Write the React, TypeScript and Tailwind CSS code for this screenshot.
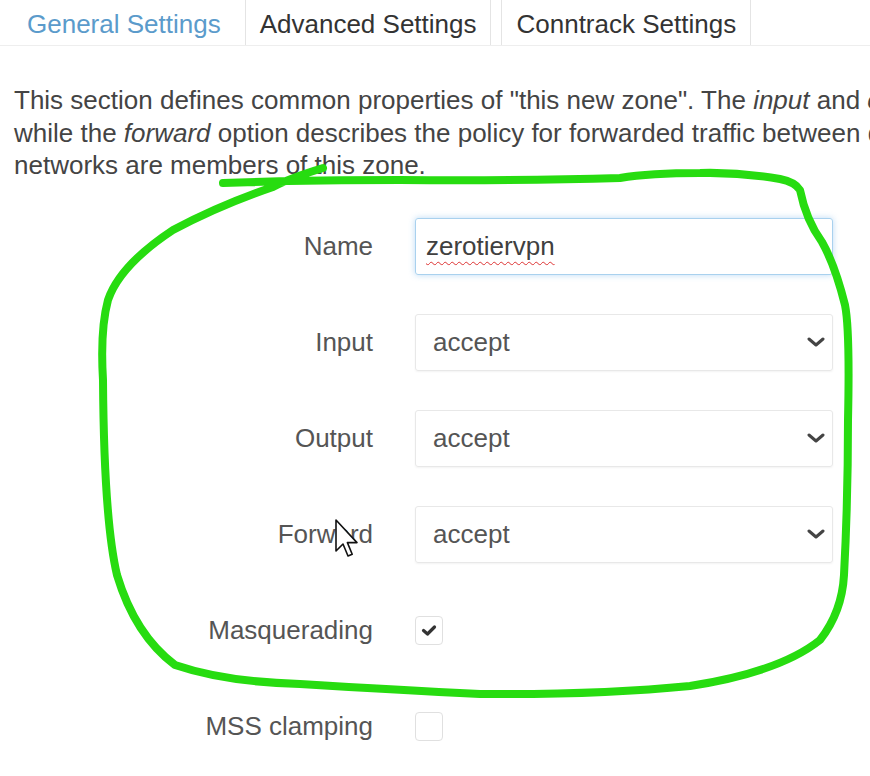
import React from "react";

const rows = [
  { label: "Input", value: "accept" },
  { label: "Output", value: "accept" },
  { label: "Forward", value: "accept" },
];

function Chevron() {
  return (
    <svg width="18" height="12" viewBox="0 0 18 12" className="text-[#444]">
      <path d="M2 3 L9 9 L16 3" fill="none" stroke="currentColor" strokeWidth="3" strokeLinecap="round" strokeLinejoin="round" />
    </svg>
  );
}

function Row({ label, children }: { label: string; children: React.ReactNode }) {
  return (
    <div className="flex items-center h-[57px] gap-[42px]">
      <div className="w-[373px] text-right text-[#555]">{label}</div>
      <div className="w-[418px]">{children}</div>
    </div>
  );
}

function Checkbox({ checked }: { checked?: boolean }) {
  return (
    <div className="w-[28px] h-[29px] border border-[#e0e0e0] rounded-[4px] bg-white flex items-center justify-center">
      {checked && (
        <svg width="16" height="13" viewBox="0 0 16 13">
          <path d="M2.5 6.5 L6.5 10 L13.5 3" fill="none" stroke="#333" strokeWidth="3.2" strokeLinecap="round" strokeLinejoin="round" />
        </svg>
      )}
    </div>
  );
}

export default function App() {
  return (
    <div className="relative w-[870px] h-[776px] overflow-hidden bg-white font-['Liberation_Sans',Arial,sans-serif] text-[26px]">
      <div className="flex items-stretch h-[46px] border-b border-[#eeeeee]">
        <div className="ml-[13px] px-[14px] pt-[3px] flex items-center text-[#5b9bcb]">General Settings</div>
        <div className="ml-[10px] px-[14px] pt-[3px] flex items-center text-[#333] border-x border-[#e4e4e4]">Advanced Settings</div>
        <div className="ml-[10px] px-[14px] pt-[3px] flex items-center text-[#333] border-x border-[#e4e4e4]">Conntrack Settings</div>
      </div>

      <div className="mt-[38px] pl-[14px] w-[870px] overflow-hidden leading-[32.5px] text-[#444] whitespace-nowrap">
        <p>
          This section defines common properties of "this new zone". The <i>input</i> and <i>output</i> options set the default policies for traffic entering and leaving this zone
        </p>
        <p>
          while the <i>forward</i> option describes the policy for forwarded traffic between different networks within the zone. <i>Covered networks</i> specifies which available
        </p>
        <p>networks are members of this zone.</p>
      </div>

      <div className="mt-[36px] flex flex-col gap-[39px]">
        <Row label="Name">
          <div className="h-[57px] border border-[#a9d1ee] rounded-[3px] shadow-[0_0_6px_rgba(102,175,233,0.45)] flex items-center px-[10px] text-[#404040]">
            <span className="underline decoration-wavy decoration-[#d33] decoration-1 underline-offset-[6px]">zerotiervpn</span>
          </div>
        </Row>
        {rows.map((r) => (
          <Row key={r.label} label={r.label}>
            <div className="h-[57px] border border-[#e8e8e8] rounded-[3px] shadow-[0_1px_2px_rgba(0,0,0,0.05)] flex items-center justify-between pl-[17px] pr-[7px] text-[#555]">
              <span>{r.value}</span>
              <Chevron />
            </div>
          </Row>
        ))}
        <Row label="Masquerading">
          <Checkbox checked />
        </Row>
        <Row label="MSS clamping">
          <Checkbox />
        </Row>
      </div>

      {/* hand-drawn annotation */}
      <svg className="absolute inset-0 pointer-events-none" width="870" height="776" viewBox="0 0 870 776">
        <path
          d="M323 168 Q290 178 273 187 Q220 205 173 230 Q120 265 108 300 Q100 330 103 380 Q104 520 117 575 Q135 635 175 665 Q225 682 300 684 Q400 690 480 694 Q600 695 690 686 Q780 672 820 640 Q842 612 844 575 Q848 500 848 420 Q850 330 845 305 Q835 265 822 242 Q806 220 800 190 Q795 182 780 179 Q740 172 700 173 Q650 173 620 178 Q520 181 400 180 Q300 180 223 183"
          fill="none"
          stroke="#27dc10"
          strokeWidth="8"
          strokeLinecap="round"
          strokeLinejoin="round"
        />
      </svg>

      {/* mouse cursor */}
      <svg className="absolute left-[335px] top-[517px] pointer-events-none" width="24" height="46" viewBox="0 0 12 21">
        <path d="M0.5 0.5 L0.5 16 L4 12.5 L6.5 18.5 L8.6 17.6 L6.2 11.8 L11 11.8 Z" fill="#fff" stroke="#111" strokeWidth="0.8" strokeLinejoin="round" />
      </svg>
    </div>
  );
}
